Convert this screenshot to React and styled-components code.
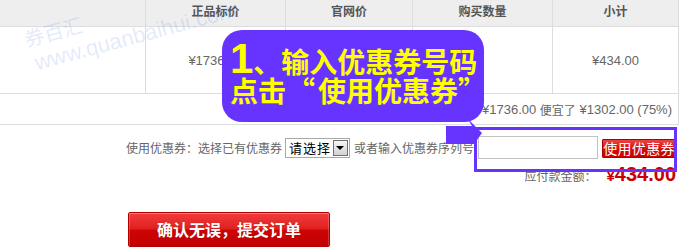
import React from "react";
import styled, { createGlobalStyle } from "styled-components";

const Global = createGlobalStyle`
  html, body { margin: 0; padding: 0; background: #fff; }
  body {
    font-family: "Liberation Sans", "Noto Sans CJK SC", sans-serif;
    font-size: 12px;
    color: #666;
  }
`;

const Page = styled.div`
  position: relative;
  width: 688px;
  height: 251px;
  overflow: hidden;
  background: #fff;
`;

const Table = styled.div`
  display: grid;
  grid-template-columns: 146px 140px 127px 140px 126px;
  width: 679px;
`;

const HeadCell = styled.div`
  box-sizing: border-box;
  height: 27px;
  padding-bottom: 5px;
  display: flex;
  align-items: center;
  justify-content: center;
  background: #eeeeee;
  border-right: 1px solid #dddddd;
  border-bottom: 1px solid #dddddd;
  font-family: "Noto Sans CJK SC", sans-serif;
  font-weight: 700;
  font-size: 12px;
  color: #555;
`;

const BodyCell = styled.div`
  box-sizing: border-box;
  height: 67px;
  display: flex;
  align-items: center;
  justify-content: center;
  border-right: 1px solid #dddddd;
  border-bottom: 1px solid #dddddd;
  color: #666;
`;

const TotalCell = styled.div`
  grid-column: 1 / -1;
  box-sizing: border-box;
  height: 31px;
  display: flex;
  align-items: center;
  justify-content: flex-end;
  padding-right: 6px;
  border-right: 1px solid #dddddd;
  border-bottom: 1px solid #dddddd;
  color: #666;
  white-space: pre;
`;

const Num = styled.span`
  font-family: "Liberation Sans", sans-serif;
  font-size: 13px;
`;

const Cjk = styled.span`
  font-family: "Noto Sans CJK SC", sans-serif;
  font-size: 12px;
`;

const CouponRow = styled.div`
  display: flex;
  justify-content: flex-end;
  align-items: center;
  gap: 4px;
  height: 23px;
  margin-top: 11px;
  padding-right: 12px;
  font-family: "Noto Sans CJK SC", sans-serif;
  font-size: 12px;
  color: #666;
  white-space: nowrap;
`;

const Select = styled.div`
  box-sizing: border-box;
  width: 65px;
  height: 20px;
  margin-left: -1px;
  border: 1px solid #a8a8a8;
  display: flex;
  align-items: center;
  justify-content: space-between;
  padding: 0 1px 0 3px;
  background: #fff;
  font-family: "Noto Sans CJK SC", sans-serif;
  font-size: 13px;
  letter-spacing: 1px;
  color: #000;
`;

const SelectArrow = styled.span`
  box-sizing: border-box;
  width: 15px;
  height: 16px;
  border: 1px solid #6f6f6f;
  background: linear-gradient(#f6f6f6, #d2d2d2);
  display: flex;
  align-items: center;
  justify-content: center;
  &::after {
    content: "";
    border-left: 4px solid transparent;
    border-right: 4px solid transparent;
    border-top: 4px solid #000;
    margin-top: 1px;
  }
`;

const CodeInput = styled.input`
  box-sizing: border-box;
  width: 120px;
  height: 23px;
  border: 1px solid #c2c2c2;
  background: #fff;
  outline: none;
  margin: 0;
  padding: 0 3px;
`;

const CouponButton = styled.button`
  box-sizing: border-box;
  width: 74px;
  height: 19px;
  margin: 2px 0 0;
  padding: 0;
  border: 1px solid #a80000;
  border-radius: 1px;
  background: linear-gradient(#ee4444, #d40a0a 55%, #c80000);
  color: #fff;
  font-family: "Noto Sans CJK SC", sans-serif;
  font-size: 14px;
  line-height: 17px;
  letter-spacing: 0.3px;
`;

const PayRow = styled.div`
  display: flex;
  justify-content: flex-end;
  align-items: baseline;
  height: 26px;
  margin-top: 4px;
  padding-right: 12px;
  white-space: nowrap;
`;

const PayLabel = styled.span`
  font-family: "Noto Sans CJK SC", sans-serif;
  font-size: 12px;
  color: #666;
`;

const Amount = styled.span`
  margin-left: ${(p) => p.$gap}px;
  color: #cc0000;
  font-family: "Liberation Sans", sans-serif;
  font-weight: 700;
  font-size: ${(p) => p.$size}px;
`;

const SubmitWrap = styled.div`
  margin-top: 23px;
  padding-left: 128px;
`;

const SubmitButton = styled.button`
  box-sizing: border-box;
  width: 202px;
  height: 35px;
  padding: 0;
  border: 1px solid #b00000;
  border-radius: 2px;
  background: linear-gradient(#f23c3c, #e02020 48%, #cc0404 52%, #c40000);
  box-shadow: inset 0 1px 0 rgba(255, 255, 255, 0.35), inset 1px 0 0 rgba(255, 255, 255, 0.2), inset -1px 0 0 rgba(255, 255, 255, 0.2);
  color: #fff;
  font-family: "Noto Sans CJK SC", sans-serif;
  font-weight: 700;
  font-size: 16px;
  line-height: 33px;
  text-shadow: 0 0 1px rgba(120, 0, 0, 0.5);
`;

const Watermark = styled.span`
  position: absolute;
  left: ${(p) => p.$x}px;
  top: ${(p) => p.$y}px;
  font-family: ${(p) => (p.$cjk ? '"Noto Sans CJK SC", sans-serif' : '"Liberation Sans", sans-serif')};
  font-size: ${(p) => p.$size}px;
  line-height: ${(p) => p.$size}px;
  color: rgba(80, 125, 230, 0.17);
  transform: rotate(-15deg);
  transform-origin: 0 100%;
  white-space: nowrap;
  pointer-events: none;
  z-index: 2;
`;

const Bubble = styled.div`
  position: absolute;
  left: 222px;
  top: 30px;
  width: 262px;
  height: 92px;
  box-sizing: border-box;
  padding: 17px 0 0 8px;
  background: #6633ff;
  border-radius: 20px;
  color: #ffff00;
  font-family: "Noto Sans CJK SC", sans-serif;
  font-weight: 700;
  font-size: 28px;
  line-height: 29px;
  white-space: nowrap;
  z-index: 3;
`;

const BigDigit = styled.span`
  font-family: "Liberation Sans", sans-serif;
  font-size: 42px;
  line-height: 0;
`;

const Quote = styled.span`
  display: inline-block;
  width: ${(p) => (p.$open ? 32 : 22)}px;
  text-align: ${(p) => (p.$open ? "right" : "left")};
  padding-right: ${(p) => (p.$open ? 3 : 0)}px;
  box-sizing: border-box;
`;

const Tail = styled.svg`
  position: absolute;
  left: 440px;
  top: 110px;
  z-index: 3;
`;

const Frame = styled.div`
  position: absolute;
  left: 474px;
  top: 127px;
  width: 203px;
  height: 45px;
  box-sizing: border-box;
  border: 3px solid #6633ff;
  z-index: 3;
  pointer-events: none;
`;

export default function App() {
  return (
    <Page>
      <Global />
      <Table>
        <HeadCell />
        <HeadCell>正品标价</HeadCell>
        <HeadCell>官网价</HeadCell>
        <HeadCell>购买数量</HeadCell>
        <HeadCell>小计</HeadCell>

        <BodyCell />
        <BodyCell><Num>¥1736.00</Num></BodyCell>
        <BodyCell><Num>¥434.00</Num></BodyCell>
        <BodyCell />
        <BodyCell><Num>¥434.00</Num></BodyCell>

        <TotalCell>
          <Cjk>商品总价：</Cjk>
          <Num>¥1736.00 </Num>
          <Cjk>便宜了</Cjk>
          <Num> ¥1302.00 (75%)</Num>
        </TotalCell>
      </Table>

      <CouponRow>
        <span>使用优惠券：选择已有优惠券</span>
        <Select>
          <span>请选择</span>
          <SelectArrow />
        </Select>
        <span>或者输入优惠券序列号</span>
        <CodeInput type="text" />
        <CouponButton type="button">使用优惠券</CouponButton>
      </CouponRow>

      <PayRow>
        <PayLabel>应付款金额：</PayLabel>
        <Amount $size={15} $gap={10}>¥</Amount>
        <Amount $size={20} $gap={0}>434.00</Amount>
      </PayRow>

      <SubmitWrap>
        <SubmitButton type="button">确认无误，提交订单</SubmitButton>
      </SubmitWrap>

      <Watermark $x={27} $y={29} $size={20} $cjk>券百汇</Watermark>
      <Watermark $x={38} $y={52} $size={22}>www.quanbaihui.com</Watermark>

      <Bubble>
        <BigDigit>1</BigDigit>、输入优惠券号码
        <br />
        点击<Quote $open>“</Quote>使用优惠券<Quote>”</Quote>
      </Bubble>
      <Tail width="50" height="40" viewBox="0 0 50 40">
        <polygon points="6,16 32,16 27,8 42,23 34,34 6,34" fill="#6633ff" />
      </Tail>
      <Frame />
    </Page>
  );
}
